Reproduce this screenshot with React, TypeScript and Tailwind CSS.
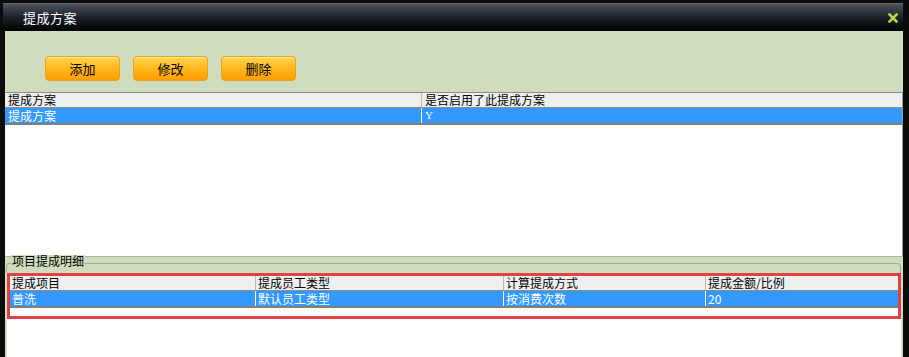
import React from "react";

const font = "font-['Noto_Sans_CJK_SC','Noto_Sans',sans-serif]";

const planRows = [{ name: "提成方案", enabled: "Y" }];

const detailCols = [
    { title: "提成项目", w: "w-[245px]" },
    { title: "提成员工类型", w: "w-[248px]" },
    { title: "计算提成方式", w: "w-[202px]" },
    { title: "提成金额/比例", w: "flex-1" },
];

const detailRows = [["普洗", "默认员工类型", "按消费次数", "20"]];

function OrangeButton({ label }: { label: string }) {
    return (
        <button className="w-[75px] h-[25px] rounded-[4px] border border-[#e9a21c] bg-gradient-to-b from-[#ffd54d] via-[#ffb81a] to-[#ff9d00] text-[13px] text-black leading-none shadow-[inset_0_1px_0_#ffe9a0]">
            {label}
        </button>
    );
}

function CloseIcon() {
    return (
        <svg width="10" height="10" viewBox="0 0 10 10">
            <path d="M1.5 1.5 L8.5 8.5 M8.5 1.5 L1.5 8.5" stroke="#b4d84c" strokeWidth="2.6" strokeLinecap="square" />
        </svg>
    );
}

function App() {
    return (
        <div className={`w-[909px] h-[357px] bg-[#0b0b0b] pt-[3px] pl-[5px] pr-[6px] flex flex-col overflow-hidden ${font}`}>
            {/* title bar */}
            <div className="h-[28px] -ml-[2px] pl-[20px] pr-[5px] flex items-center justify-between bg-gradient-to-b from-[#4c535b] via-[#1d2228] to-[#030405] border-t border-[#5d646c]">
                <span className="text-[13px] text-white tracking-[0.5px]">提成方案</span>
                <CloseIcon />
            </div>

            <div className="flex-1 flex flex-col bg-[#cfdcbd]">
                {/* toolbar */}
                <div className="h-[61px] pl-[40px] pt-[25px] flex gap-[13px]">
                    {["添加", "修改", "删除"].map((b) => (
                        <OrangeButton key={b} label={b} />
                    ))}
                </div>

                {/* plan table */}
                <div className="h-[164px] bg-white border-t border-[#8a8a8a] border-r border-r-[#9a9a9a] text-[12px] leading-none">
                    <div className="h-[15px] flex bg-[#efefef] border-b border-[#8c8c8c] text-black">
                        <div className="w-[416px] pl-[3px] flex items-center">提成方案</div>
                        <div className="flex-1 pl-[3px] flex items-center border-l border-[#b8b8b8]">是否启用了此提成方案</div>
                    </div>
                    {planRows.map((r) => (
                        <div key={r.name} className="h-[17px] flex bg-[#3399ff] border-b-2 border-[#7f7f80] text-white">
                            <div className="w-[416px] pl-[3px] flex items-center">{r.name}</div>
                            <div className="flex-1 pl-[3px] flex items-center border-l border-white font-['Liberation_Serif',serif] text-[11px]">{r.enabled}</div>
                        </div>
                    ))}
                </div>

                {/* detail group */}
                <div className="flex-1 flex flex-col border-t border-[#a9b59c] pt-[6px] pl-[1px] pr-[2px]">
                    <div className="relative h-[10px] border-t border-l border-r border-[#9fb083] rounded-t-[4px]">
                        <span className="absolute -top-[9px] left-[4px] px-[1px] bg-[#cfdcbd] text-[12px] leading-none text-black">项目提成明细</span>
                    </div>
                    <div className="flex-1 ml-[1px] bg-white">
                        <div className="border-[3px] border-[#e04146] h-[46px] text-[12px] leading-none">
                            <div className="h-[15px] flex bg-[#efefef] border-b border-[#8c8c8c] text-black">
                                {detailCols.map((c, i) => (
                                    <div key={c.title} className={`${c.w} pl-[2px] flex items-center ${i > 0 ? "border-l border-[#b8b8b8]" : ""}`}>
                                        {c.title}
                                    </div>
                                ))}
                            </div>
                            {detailRows.map((row) => (
                                <div key={row[0]} className="h-[17px] flex bg-[#3399ff] border-b-2 border-[#7f7f80] text-white">
                                    {row.map((v, i) => (
                                        <div key={i} className={`${detailCols[i].w} pl-[2px] flex items-center ${i > 0 ? "border-l border-white" : ""}`}>
                                            {v}
                                        </div>
                                    ))}
                                </div>
                            ))}
                        </div>
                    </div>
                </div>
            </div>
        </div>
    );
}

export default App;
